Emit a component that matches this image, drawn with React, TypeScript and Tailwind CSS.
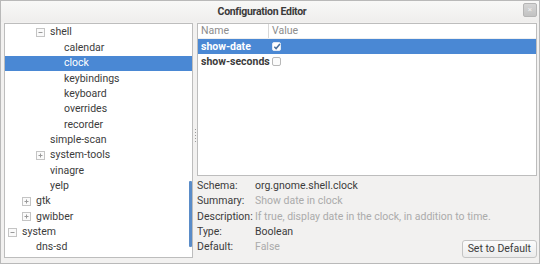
import React from "react";

interface TreeRow {
  label: string;
  level: number;
  expander?: "plus" | "minus";
  selected?: boolean;
}

const rows: TreeRow[] = [
  { label: "shell", level: 2, expander: "minus" },
  { label: "calendar", level: 3 },
  { label: "clock", level: 3, selected: true },
  { label: "keybindings", level: 3 },
  { label: "keyboard", level: 3 },
  { label: "overrides", level: 3 },
  { label: "recorder", level: 3 },
  { label: "simple-scan", level: 2 },
  { label: "system-tools", level: 2, expander: "plus" },
  { label: "vinagre", level: 2 },
  { label: "yelp", level: 2 },
  { label: "gtk", level: 1, expander: "plus" },
  { label: "gwibber", level: 1, expander: "plus" },
  { label: "system", level: 0, expander: "minus" },
  { label: "dns-sd", level: 1 },
];

const details = [
  { label: "Schema:", value: "org.gnome.shell.clock", muted: false },
  { label: "Summary:", value: "Show date in clock", muted: true },
  { label: "Description:", value: "If true, display date in the clock, in addition to time.", muted: true },
  { label: "Type:", value: "Boolean", muted: false },
  { label: "Default:", value: "False", muted: true },
];

function Expander({ kind }: { kind: "plus" | "minus" }) {
  return (
    <svg width="9" height="9" viewBox="0 0 9 9" className="shrink-0">
      <rect x="0.5" y="0.5" width="8" height="8" fill="#fafafa" stroke="#c4c4c4" />
      <path d="M2.5 4.5h4" stroke="#9a9a9a" />
      {kind === "plus" && <path d="M4.5 2.5v4" stroke="#9a9a9a" />}
    </svg>
  );
}

function Check({ checked }: { checked: boolean }) {
  return (
    <svg width="10" height="10" viewBox="0 0 10 10">
      <rect x="0.5" y="0.5" width="8" height="8" rx="1.5" fill={checked ? "#ffffff" : "#fbfbfb"} stroke={checked ? "#dfe8f4" : "#b8b8b8"} />
      {checked && <path d="M2.3 4.8l1.8 1.8 3.8-4.6" stroke="#4a6f9c" strokeWidth="1.5" fill="none" />}
    </svg>
  );
}

export default function App() {
  return (
    <div
      className="w-[540px] h-[264px] flex flex-col bg-[#f2f1f0] border border-[#b9b9b9] text-[10.5px] text-[#3c3c3c] overflow-hidden"
      style={{ fontFamily: "Roboto, 'Liberation Sans', sans-serif" }}
    >
      {/* Title bar */}
      <div className="h-[21px] shrink-0 relative flex items-center justify-center bg-gradient-to-b from-[#f8f8f7] to-[#efeeed]">
        <span className="font-bold text-[10.5px] tracking-[-0.3px] text-[#3a3a3a] mr-[16px]">Configuration Editor</span>
        <div className="absolute right-[2px] top-[2px] w-[14px] h-[14px] rounded-[2px] bg-gradient-to-b from-[#d6d6d6] to-[#c2c2c2] border border-[#b5b5b5] flex items-center justify-center">
          <span className="text-[8px] leading-none text-[#f0f0f0]">×</span>
        </div>
      </div>

      <div className="flex-1 flex min-h-0 pl-[3px] pr-[2px] pb-[5px] pt-[1px]">
        {/* Tree */}
        <div className="w-[189px] shrink-0 relative bg-white border border-[#bdbdbd] overflow-hidden pt-[1px]">
          {rows.map((r) => (
            <div
              key={r.label}
              className={`h-[15.36px] flex items-center ${r.selected ? "bg-[#4a88d4] text-white" : ""}`}
              style={{ paddingLeft: 3 + r.level * 14 }}
            >
              <div className="w-[14px] shrink-0 flex items-center">{r.expander && <Expander kind={r.expander} />}</div>
              <span className="leading-none">{r.label}</span>
            </div>
          ))}
          <div className="absolute right-[0px] top-[157px] w-[3px] h-[66px] bg-[#5a8cc8] rounded-[1px]" />
        </div>

        {/* Paned handle */}
        <div className="w-[4px] shrink-0 flex flex-col items-center justify-center gap-[2px] pb-[10px]">
          {[0, 1, 2, 3, 4].map((i) => (
            <div key={i} className="w-[1px] h-[1px] bg-[#9c9c9c]" />
          ))}
        </div>

        {/* Right side */}
        <div className="flex-1 flex flex-col min-w-0">
          <div className="h-[153px] shrink-0 bg-white border border-[#bdbdbd]">
            <div className="h-[15px] flex items-center text-[#8c8c8c] border-b border-[#efefef]">
              <div className="w-[71px] shrink-0 pl-[3px] border-r border-[#d8d8d8] h-full flex items-center">Name</div>
              <div className="pl-[3px]">Value</div>
            </div>
            <div className="h-[15.36px] flex items-center bg-[#4a88d4] text-white font-bold">
              <div className="w-[71px] shrink-0 pl-[3px] whitespace-nowrap">show-date</div>
              <div className="pl-[3px] flex items-center">
                <Check checked />
              </div>
            </div>
            <div className="h-[15.36px] flex items-center font-bold">
              <div className="w-[71px] shrink-0 pl-[3px] whitespace-nowrap">show-seconds</div>
              <div className="pl-[3px] flex items-center">
                <Check checked={false} />
              </div>
            </div>
          </div>

          <div className="flex-1 flex pt-[2px]">
            <div className="flex-1 min-w-0 flex flex-col">
              {details.map((d) => (
                <div key={d.label} className="h-[15.36px] flex items-center whitespace-nowrap">
                  <div className="w-[58px] shrink-0">{d.label}</div>
                  <div className={d.muted ? "text-[#ababab]" : ""}>{d.value}</div>
                </div>
              ))}
            </div>
            <div className="self-end shrink-0 pb-[0px]">
              <button className="h-[18px] px-[5px] rounded-[3px] border border-[#c4c4c4] bg-gradient-to-b from-[#fbfbfb] to-[#ececec] text-[#3c3c3c] leading-none whitespace-nowrap">
                Set to Default
              </button>
            </div>
          </div>
        </div>
      </div>
    </div>
  );
}
